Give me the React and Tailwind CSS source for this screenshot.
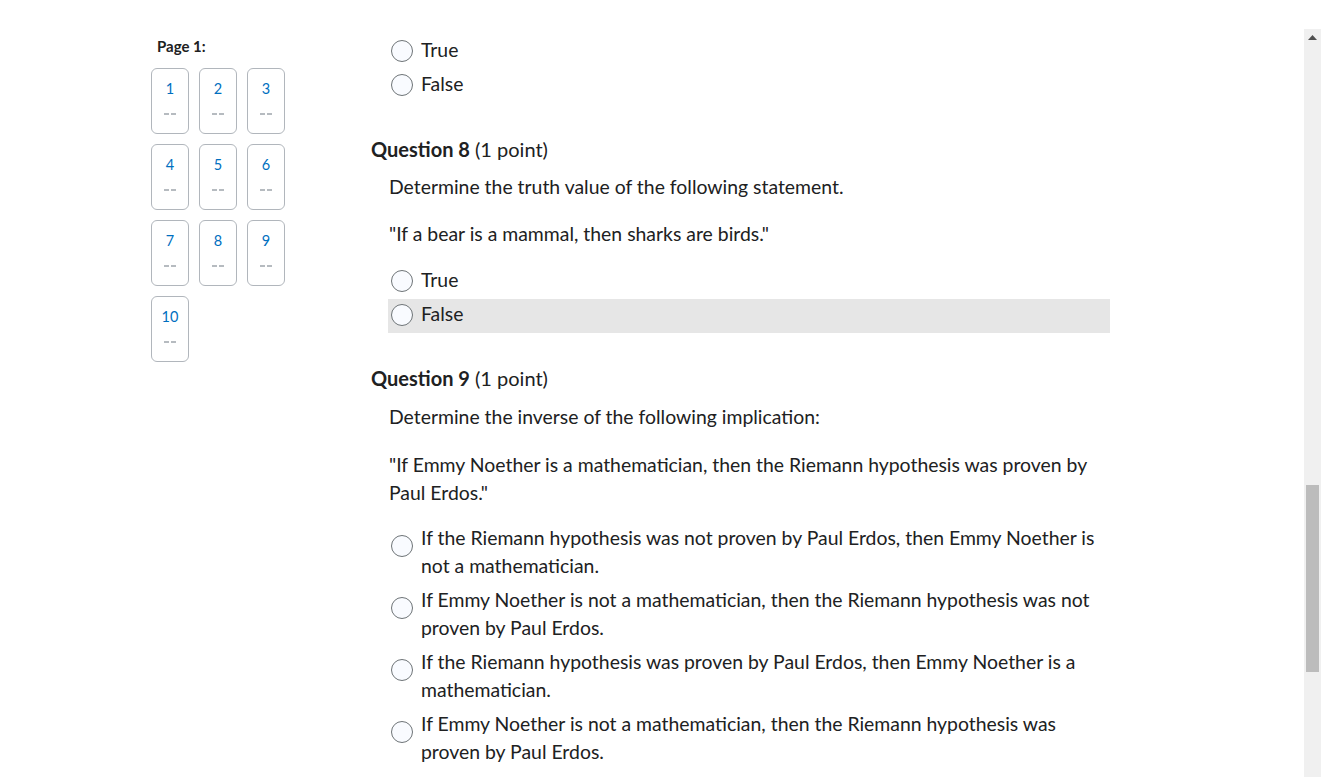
import React from "react";

const font = { fontFamily: "Lato, 'Noto Sans', sans-serif" };

function Radio({ multi }) {
  return (
    <span
      className={`block shrink-0 w-[22px] h-[22px] rounded-full border border-[#6e7477] bg-[#f9fbff] ${multi ? "mt-[11px]" : "mt-[4px]"}`}
    />
  );
}

function Option({ text, highlight, multi }) {
  return (
    <div className={`flex items-start pt-[1px] pb-[5px] pl-[3px] w-[722px] ${highlight ? "bg-[#e6e6e6]" : ""}`}>
      <Radio multi={multi} />
      <span className="ml-[8px] text-[19.4px] leading-[28px] text-[#202122]">{text}</span>
    </div>
  );
}

function Tile({ n }) {
  return (
    <div className="w-[38px] h-[66px] rounded-[6px] border border-[#b1b6bc] flex flex-col items-center">
      <span className="mt-[10px] text-[14.5px] leading-[20px] text-[#006fbf]">{n}</span>
      <span className="mt-[14px] flex gap-[2px]">
        <span className="block w-[5px] h-[2px] bg-[#b6bbc0]" />
        <span className="block w-[5px] h-[2px] bg-[#b6bbc0]" />
      </span>
    </div>
  );
}

export default function App() {
  return (
    <div className="w-[1342px] h-[777px] overflow-hidden bg-white flex" style={font}>
      <div className="w-[151px] shrink-0" />
      <div className="w-[220px] shrink-0 pt-[36px]">
        <div className="pl-[6px] text-[15px] leading-[20px] font-bold text-[#202122]">Page 1:</div>
        <div className="mt-[12px] grid grid-cols-[38px_38px_38px] gap-x-[10px] gap-y-[10px]">
          {[1, 2, 3, 4, 5, 6, 7, 8, 9, 10].map((n) => (
            <Tile key={n} n={n} />
          ))}
        </div>
      </div>
      <div className="flex-1 pt-[35px] text-[#202122]">
        <div className="pl-[17px]">
          <Option text="True" />
          <Option text="False" />
        </div>

        <div className="mt-[32px] text-[20px] leading-[28px]">
          <span className="font-bold">Question 8</span> (1 point)
        </div>
        <div className="pl-[18px]">
          <p className="mt-[10px] text-[19.4px] leading-[28px]">Determine the truth value of the following statement.</p>
          <p className="mt-[19px] text-[19.4px] leading-[28px]">"If a bear is a mammal, then sharks are birds."</p>
        </div>
        <div className="pl-[17px] mt-[17px]">
          <Option text="True" />
          <Option text="False" highlight />
        </div>

        <div className="mt-[31px] text-[20px] leading-[28px]">
          <span className="font-bold">Question 9</span> (1 point)
        </div>
        <div className="pl-[18px] w-[740px]">
          <p className="mt-[11px] text-[19.4px] leading-[28px]">Determine the inverse of the following implication:</p>
          <p className="mt-[20px] text-[19.4px] leading-[28px]">
            "If Emmy Noether is a mathematician, then the Riemann hypothesis was proven by Paul Erdos."
          </p>
        </div>
        <div className="pl-[17px] mt-[16px]">
          <Option multi text="If the Riemann hypothesis was not proven by Paul Erdos, then Emmy Noether is not a mathematician." />
          <Option multi text="If Emmy Noether is not a mathematician, then the Riemann hypothesis was not proven by Paul Erdos." />
          <Option multi text="If the Riemann hypothesis was proven by Paul Erdos, then Emmy Noether is a mathematician." />
          <Option multi text="If Emmy Noether is not a mathematician, then the Riemann hypothesis was proven by Paul Erdos." />
        </div>
      </div>
      <div className="w-[17px] shrink-0 mt-[29px] bg-[#f0f0f0] flex flex-col items-center">
        <svg width="9" height="5" viewBox="0 0 9 5" className="mt-[6px]">
          <polygon points="4.5,0 9,5 0,5" fill="#505050" />
        </svg>
        <div className="mt-[445px] w-[13px] h-[187px] bg-[#bcbcbc]" />
      </div>
      <div className="w-[21px] shrink-0" />
    </div>
  );
}
